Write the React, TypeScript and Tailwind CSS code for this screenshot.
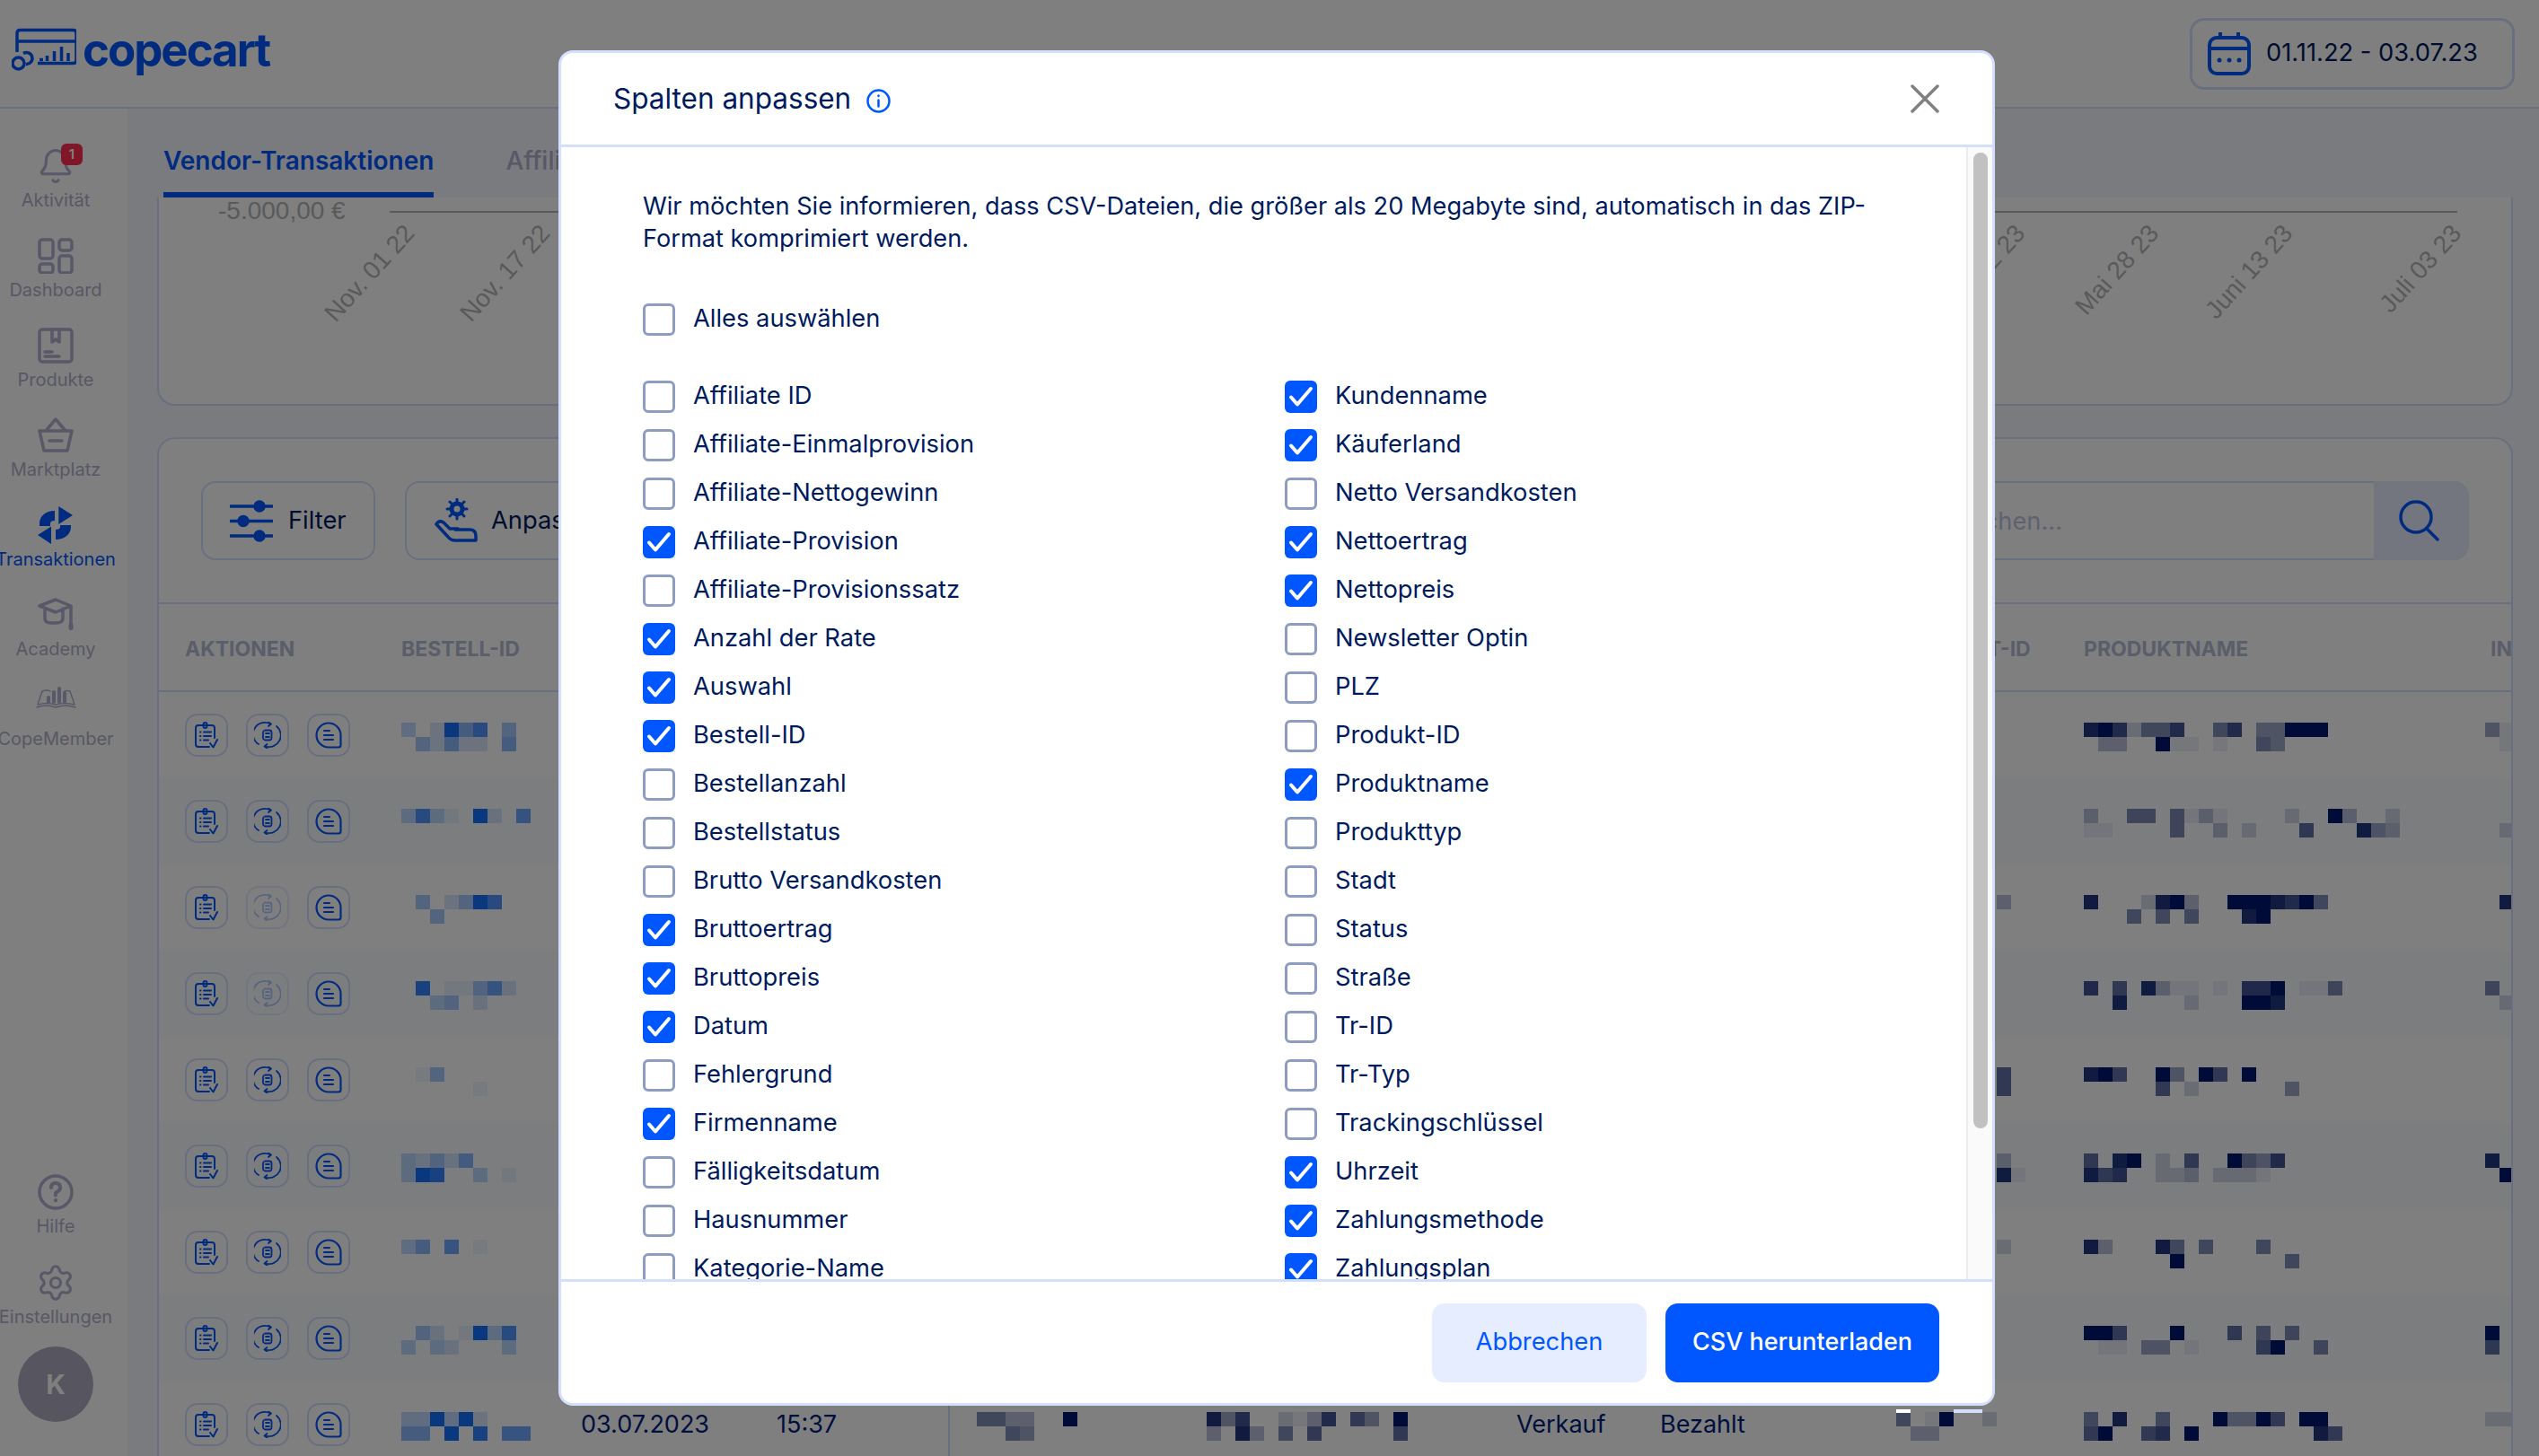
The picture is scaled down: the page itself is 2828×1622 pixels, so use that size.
import React from 'react';
import { Bell, Settings } from 'lucide-react';

const leftColumns: [string, boolean][] = [
  ['Affiliate ID', false],
  ['Affiliate-Einmalprovision', false],
  ['Affiliate-Nettogewinn', false],
  ['Affiliate-Provision', true],
  ['Affiliate-Provisionssatz', false],
  ['Anzahl der Rate', true],
  ['Auswahl', true],
  ['Bestell-ID', true],
  ['Bestellanzahl', false],
  ['Bestellstatus', false],
  ['Brutto Versandkosten', false],
  ['Bruttoertrag', true],
  ['Bruttopreis', true],
  ['Datum', true],
  ['Fehlergrund', false],
  ['Firmenname', true],
  ['Fälligkeitsdatum', false],
  ['Hausnummer', false],
  ['Kategorie-Name', false],
];

const rightColumns: [string, boolean][] = [
  ['Kundenname', true],
  ['Käuferland', true],
  ['Netto Versandkosten', false],
  ['Nettoertrag', true],
  ['Nettopreis', true],
  ['Newsletter Optin', false],
  ['PLZ', false],
  ['Produkt-ID', false],
  ['Produktname', true],
  ['Produkttyp', false],
  ['Stadt', false],
  ['Status', false],
  ['Straße', false],
  ['Tr-ID', false],
  ['Tr-Typ', false],
  ['Trackingschlüssel', false],
  ['Uhrzeit', true],
  ['Zahlungsmethode', true],
  ['Zahlungsplan', true],
];

// censored table cells, one digit per 16px block (0 = empty, 9 = full colour)
const rows = [
  { id: ['30295704', '04252205'], pid: [], name: ['89725570057044999', '03300911010054'], extra: ['41', '01'] },
  { id: ['373109206', ''], pid: [], name: ['3005505131000020093002', '1100005003020006000843'], extra: ['00', '02'] },
  { id: ['0402497', '0040000'], pid: ['00000003', ''], name: ['80002893009998795', '0005050500089'], extra: ['08', '00'], off: true },
  { id: ['08011462', '00340200'], pid: [], name: ['706083110107790115', '00800002000998'], extra: ['50', '02'], off: true },
  { id: ['0140000', '000001'], pid: ['00000006', '00000006'], name: ['896009409609', '000006020000004'], extra: ['00', '00'] },
  { id: ['32425', '39800301'], pid: ['00000003', '000000081'], name: ['60890206009547', '8670022302221'], extra: ['80', '09'] },
  { id: ['350601', ''], pid: ['00000002', ''], name: ['8300085050005', '000000900000005'], extra: ['00', '00'] },
  { id: ['04201937', '30320003'], pid: [], name: ['996000900060505', '01104401000069005'], extra: ['90', '60'] },
  { id: ['339392', '550908066'], pid: ['5019002', '0330000'], name: ['50800500094496099', '690067090000000086'], extra: ['22', '00'], last: true },
];

const gridCols = 'grid grid-cols-[241px_200px_218px_223px_256px_345px_160px_263px_209px_447px_100px]';

function Mosaic({ lines, color }: { lines: string[]; color: string }) {
  return (
    <div className="flex flex-col mt-[10px]">
      {lines.map((line, i) => (
        <div key={i} className="flex h-4">
          {line.split('').map((d, j) => (
            <div key={j} className={`w-4 h-4 shrink-0 ${color}`} style={{ opacity: Math.pow(Number(d) / 9, 1.2) }} />
          ))}
        </div>
      ))}
    </div>
  );
}

function Logo() {
  return (
    <svg width="72" height="50" viewBox="0 0 72 50" className="text-[#0057ff]">
      <path d="M6 27V6q0-3.500 3.500-3.500h59q3.500 0 3.500 3.500v30q0 3.500-3.500 3.500H29" fill="none" stroke="currentColor" strokeWidth="3.500" />
      <path d="M6 15h66" stroke="currentColor" strokeWidth="3.500" />
      <circle cx="7.500" cy="39.500" r="6.500" fill="none" stroke="currentColor" strokeWidth="3.500" />
      <path d="M13 28.500a6.500 6.500 0 1 1 3 12" fill="none" stroke="currentColor" strokeWidth="3.500" />
      <path d="M31 35.500h4M39.500 37v-6M47.500 37V26M55.500 37V21M63 37v-9" stroke="currentColor" strokeWidth="3.500" fill="none" />
    </svg>
  );
}

function CalendarIcon() {
  return (
    <svg width="48" height="48" viewBox="0 0 48 48" fill="none" stroke="#0057ff" strokeWidth="4" strokeLinecap="round">
      <rect x="2" y="6" width="44" height="40" rx="8" />
      <path d="M2 18h44M14 1v5M34 1v5" />
      <circle cx="13" cy="31" r="2.500" fill="#0057ff" stroke="none" />
      <circle cx="24" cy="31" r="2.500" fill="#0057ff" stroke="none" />
      <circle cx="35" cy="31" r="2.500" fill="#0057ff" stroke="none" />
    </svg>
  );
}

function SidebarItem({ icon, label, active }: { icon: React.ReactNode; label: string; active?: boolean }) {
  return (
    <div className="w-[124px] flex flex-col items-center">
      <div className="h-[42px] flex items-center justify-center">{icon}</div>
      <span className={`mt-[4px] text-[20px] leading-[26px] whitespace-nowrap ${active ? 'text-[#0057ff]' : 'text-[#b0b0cc]'}`}>{label}</span>
    </div>
  );
}

const navStroke = { fill: 'none', stroke: '#b0b0d0', strokeWidth: 3.5, strokeLinecap: 'round', strokeLinejoin: 'round' } as const;

function ClipboardIcon() {
  return (
    <svg width="26" height="30" viewBox="0 0 26 30" fill="none" stroke="#0057ff" strokeWidth="2" strokeLinecap="round" strokeLinejoin="round">
      <path d="M16 28H4q-3 0-3-3V7q0-3 3-3h15q3 0 3 3v11" />
      <rect x="9.500" y="1" width="4" height="6" rx="2" />
      <path d="M6 11.500h.5M6 16h.5M6 20.500h.5M10 11.500h8M10 16h8M10 20.500h5M17 24l3.500 4.500L25 20" />
    </svg>
  );
}

function RefundIcon() {
  return (
    <svg width="30" height="30" viewBox="0 0 30 30" fill="none" stroke="#0057ff" strokeWidth="1.800" strokeLinecap="round" strokeLinejoin="round">
      <path d="M5 25A13 13 0 0 1 18 2.500M25 5a13 13 0 0 1-12 22.500" />
      <path d="M16 .5l3 2-3 2.500M14.500 25l-3 2.500 3 2" />
      <path d="M12 9.500h5q2.500 0 2.500 2.500v6q0 2.500-2.500 2.500h-5q-2-.5-2-2.500v-6q0-2 2-2.500zM13 13h4M13 17h4" />
    </svg>
  );
}

function NoteIcon() {
  return (
    <svg width="30" height="30" viewBox="0 0 30 30" fill="none" stroke="#0057ff" strokeWidth="2.200" strokeLinecap="round" strokeLinejoin="round">
      <path d="M15 1.500a13.500 13.500 0 0 1 13.500 13.500v11q0 2.500-2.500 2.500H15a13.500 13.500 0 0 1 0-27z" />
      <path d="M10 10h6M10 15h10M10 20h10" />
    </svg>
  );
}

function ActionButton({ children, off }: { children: React.ReactNode; off?: boolean }) {
  return (
    <div className={`w-[48px] h-[48px] rounded-[14px] border-2 flex items-center justify-center ${off ? 'border-[#e6ecff]' : 'border-[#d4deff]'}`}>
      <div className={off ? 'opacity-30 flex' : 'flex'}>{children}</div>
    </div>
  );
}

function Checkbox({ checked, label }: { checked?: boolean; label: string }) {
  return (
    <div className="flex items-center gap-[20px] h-[36px]">
      {checked ? (
        <svg width="36" height="36" viewBox="0 0 36 36" className="shrink-0">
          <rect width="36" height="36" rx="6" fill="#0057ff" />
          <path d="M7 18.500l7 8L29 9" fill="none" stroke="#fff" strokeWidth="4" strokeLinecap="round" strokeLinejoin="round" />
        </svg>
      ) : (
        <div className="w-[36px] h-[36px] shrink-0 rounded-[6px] border-[3px] border-[#8f9cc2] bg-white" />
      )}
      <span className="text-[27.3px] leading-[36px] pb-[3px] text-[#001a5e] whitespace-nowrap">{label}</span>
    </div>
  );
}

export default function App() {
  return (
    <div className="relative w-[2828px] h-[1622px] overflow-hidden bg-white font-['Inter',sans-serif] text-[#001a5e]">
      <header className="h-[121px] flex items-center justify-between pl-[13px] pr-[27px] border-b-2 border-[#d4deff]">
        <div className="flex items-center gap-[7px] pb-[8px]">
          <Logo />
          <span className="text-[51px] font-bold leading-none tracking-[-0.04em] text-[#0057ff]">copecart</span>
        </div>
        <div className="w-[362px] h-[80px] rounded-[16px] border-[3px] border-[#d4deff] flex items-center gap-[17px] pl-[17px]">
          <CalendarIcon />
          <span className="text-[27.3px]">01.11.22 - 03.07.23</span>
        </div>
      </header>

      <div className="flex h-[1501px]">
        <aside className="w-[142px] shrink-0 bg-white flex flex-col justify-between pt-[43px] pb-[38px]">
          <div className="flex flex-col gap-[28px]">
            <div className="relative">
              <SidebarItem label="Aktivität" icon={<Bell size={42} color="#b0b0d0" strokeWidth={1.8} />} />
              <div className="absolute left-[68px] top-[-4px] w-[24px] h-[24px] rounded-[6px] bg-[#ff2e50] text-white text-[15px] font-semibold flex items-center justify-center">1</div>
            </div>
            <SidebarItem label="Dashboard" icon={
              <svg width="40" height="40" viewBox="0 0 40 40" {...navStroke}>
                <rect x="2" y="2" width="15" height="21" rx="3" /><rect x="24" y="2" width="14" height="12" rx="3" />
                <rect x="2" y="29" width="15" height="10" rx="3" /><rect x="24" y="20" width="14" height="19" rx="3" />
              </svg>
            } />
            <SidebarItem label="Produkte" icon={
              <svg width="40" height="40" viewBox="0 0 40 40" {...navStroke}>
                <rect x="2" y="2" width="36" height="36" rx="3" />
                <path d="M16 2v14l4-3 4 3V2M8 27h8M8 32h16" />
              </svg>
            } />
            <SidebarItem label="Marktplatz" icon={
              <svg width="40" height="40" viewBox="0 0 40 40" {...navStroke}>
                <path d="M2 15h36l-5 22H7zM9 15L20 2l11 13M13 26h14" />
              </svg>
            } />
            <SidebarItem label="Transaktionen" active icon={
              <svg width="40" height="42" viewBox="0 0 40 42" fill="#0057ff">
                <path d="M23.300 0L39 10 23.300 20zM15 22.500L0 32l15 10z" />
                <path d="M19 5C9 5 2 11 2 19v3h12v-3c0-2 2-3 5-3zM20 37c10 0 17-6 17-14v-2H25v2c0 2-2 3-5 3z" />
              </svg>
            } />
            <SidebarItem label="Academy" icon={
              <svg width="40" height="38" viewBox="0 0 40 38" {...navStroke}>
                <path d="M2 9L20 2l17 7-17 7zM8 12v11q0 5 7 5h5q8 0 8-5V12M37 9v19" />
                <rect x="34.500" y="28" width="5" height="8" rx="2" fill="#b0b0d0" stroke="none" />
              </svg>
            } />
            <SidebarItem label="CopeMember" icon={
              <svg width="45" height="26" viewBox="0 0 45 26" fill="none" stroke="#b0b0d0" strokeWidth="1.500" strokeLinecap="round" strokeLinejoin="round" className="self-start">
                <path d="M1 24q10-4 21 0 11-4 22 0M2 21L7 6q6-2 9 0M43 21L38 6q-4-1-6 0M2 21q10-3 20 0 10-3 21 0" />
                <path d="M14 18v-5M20 18V7M26 18V3M32 18V8" stroke="#b0b0d0" strokeWidth="4" />
              </svg>
            } />
          </div>
          <div className="flex flex-col">
            <SidebarItem label="Hilfe" icon={
              <svg width="40" height="40" viewBox="0 0 40 40" {...navStroke}>
                <circle cx="20" cy="20" r="18" />
                <path d="M15 15q0-5 5-5t5 5q0 3-3 4.500t-2 4M20 29v.5" strokeWidth="4" />
              </svg>
            } />
            <div className="mt-[29px]">
              <SidebarItem label="Einstellungen" icon={<Settings size={44} color="#b0b0d0" strokeWidth={1.7} />} />
            </div>
            <div className="ml-[20px] mt-[20px] w-[84px] h-[84px] rounded-full bg-[#aeaac0] flex items-center justify-center text-white text-[30px] font-bold">K</div>
          </div>
        </aside>

        <main className="flex-1 min-w-0 bg-[#f2f6ff]">
          <div className="h-[99px] flex gap-[80px] pl-[40px]">
            <div className="h-full flex items-center border-b-[6px] border-[#0057ff] text-[#0057ff] text-[28px] font-semibold pt-[22px]">Vendor-Transaktionen</div>
            <div className="h-full flex items-center text-[#b0b0cc] text-[28px] font-medium pt-[16px]">Affiliate-Transaktionen</div>
          </div>

          <section className="ml-[33px] mr-[29px] h-[232px] bg-white rounded-b-[20px] border-2 border-t-0 border-[#d4deff]">
            <svg width="2622" height="230" className="font-['Liberation_Sans',sans-serif] block">
              <text x="66" y="24" fontSize="28" fill="#b4b4b4">-5.000,00 €</text>
              <path d="M257 16H2560" stroke="#b4b4b4" strokeWidth="2" />
              <g fontSize="28" fill="#b4b4b4" textAnchor="end">
                <text transform="translate(286 41) rotate(-48)">Nov. 01 22</text>
                <text transform="translate(437 41) rotate(-48)">Nov. 17 22</text>
                <text transform="translate(2080 41) rotate(-48)">Mai 12 23</text>
                <text transform="translate(2229 41) rotate(-48)">Mai 28 23</text>
                <text transform="translate(2378 41) rotate(-48)">Juni 13 23</text>
                <text transform="translate(2566 41) rotate(-48)">Juli 03 23</text>
              </g>
            </svg>
          </section>

          <section className="mt-[35px] ml-[33px] mr-[29px] bg-white rounded-t-[20px] border-2 border-b-0 border-[#d4deff] overflow-hidden">
            <div className="h-[184px] pt-[47px] px-[47px] flex justify-between border-b-2 border-[#d4deff]">
              <div className="flex gap-[33px]">
                <div className="w-[194px] h-[88px] rounded-[16px] border-2 border-[#d4deff] flex items-center gap-[17px] pl-[30px] text-[27.3px]">
                  <svg width="48" height="48" viewBox="0 0 48 48" fill="#0057ff" stroke="#0057ff" strokeWidth="3.500" strokeLinecap="round">
                    <path d="M1 8h46M1 24.500h46M1 41h46" />
                    <circle cx="33" cy="8" r="5" /><circle cx="15" cy="24.500" r="5" /><circle cx="33" cy="41" r="5" />
                  </svg>
                  Filter
                </div>
                <div className="w-[280px] h-[88px] rounded-[16px] border-2 border-[#d4deff] flex items-center gap-[14px] pl-[30px] text-[27.3px]">
                  <svg width="50" height="50" viewBox="0 0 50 50" fill="none" stroke="#0057ff" strokeWidth="3.500" strokeLinecap="round" strokeLinejoin="round">
                    <circle cx="26" cy="12" r="6" strokeWidth="5" />
                    <path d="M26 1v3M26 20v3M15 12h3M34 12h3M18 4l2 2M32 18l2 2M34 4l-2 2M18 20l2-2" strokeWidth="3" />
                    <path d="M3 29l13 14q3 4 8 4h23v-5q0-7-7-7H24M3 29q3-5 8-2l7 7h9" />
                  </svg>
                  Anpassen
                </div>
              </div>
              <div className="flex h-[88px]">
                <input readOnly placeholder="Suchen..." className="w-[484px] h-full border-2 border-r-0 border-[#d4deff] rounded-l-[16px] pl-[14px] text-[27.3px] placeholder:text-[#bac6dc] outline-none" />
                <div className="w-[106px] h-full rounded-r-[16px] bg-[#e6ebff] flex items-center justify-center">
                  <svg width="46" height="46" viewBox="0 0 46 46" fill="none" stroke="#0057ff" strokeWidth="3.500" strokeLinecap="round" className="mr-[4px]">
                    <circle cx="19" cy="19" r="17" /><path d="M31 32l12 12" />
                  </svg>
                </div>
              </div>
            </div>

            <div className={`${gridCols} h-[98px] pl-[29px] items-center border-b-2 border-[#d4deff] text-[#b4bad4] text-[23px] font-bold pt-[4px]`}>
              <span>AKTIONEN</span>
              <span>BESTELL-ID</span>
              <span /><span /><span /><span /><span /><span />
              <span className="pl-[4px]">PRODUKT-ID</span>
              <span>PRODUKTNAME</span>
              <span className="pl-[6px]">INHALT</span>
            </div>

            {rows.map((row, i) => (
              <div key={i} className={`${gridCols} h-[96px] pl-[29px] pt-[24px] items-start ${i % 2 === 1 ? 'bg-[#f8fbff]' : 'bg-white'}`}>
                <div className="flex gap-[20px]">
                  <ActionButton><ClipboardIcon /></ActionButton>
                  <ActionButton off={row.off}><RefundIcon /></ActionButton>
                  <ActionButton><NoteIcon /></ActionButton>
                </div>
                <Mosaic lines={row.id} color="bg-[#1470ff]" />
                {row.last ? (
                  <>
                    <div className="h-[48px] flex items-center text-[27px] text-[#00217a]">03.07.2023</div>
                    <div className="relative h-[48px] flex items-center text-[27px] text-[#00217a]">
                      15:37
                      <div className="absolute right-[30px] top-[-24px] h-[96px] w-[2px] bg-[#d4deff]" />
                    </div>
                    <Mosaic lines={['5533009', '0054']} color="bg-[#00186e]" />
                    <Mosaic lines={['84700213706409', '30830506000006']} color="bg-[#00186e]" />
                    <div className="h-[48px] flex items-center text-[27px] text-[#00217a]">Verkauf</div>
                    <div className="h-[48px] flex items-center text-[27px] text-[#00217a]">Bezahlt</div>
                  </>
                ) : (
                  <>
                    <div /><div /><div /><div /><div /><div />
                  </>
                )}
                <Mosaic lines={row.pid} color="bg-[#00186e]" />
                <Mosaic lines={row.name} color="bg-[#00186e]" />
                <Mosaic lines={row.extra} color="bg-[#00186e]" />
              </div>
            ))}
          </section>
        </main>
      </div>

      <div className="absolute inset-0 bg-black/50" />

      <div className="absolute left-[2112px] top-[1570px] w-[16px] h-[4px] bg-white" />
      <div className="absolute left-[2176px] top-[1570px] w-[32px] h-[4px] bg-[#d4deff]" />

      <div className="absolute left-[622px] top-[56px] w-[1600px] h-[1510px] rounded-[16px] border-[3px] border-[#d4deff] bg-white flex flex-col overflow-hidden">
        <div className="h-[105px] shrink-0 flex items-center justify-between pl-[58px] pr-[59px] border-b-[3px] border-[#d4deff]">
          <div className="flex items-center gap-[17px]">
            <h2 className="text-[31.5px] leading-[44px] font-normal">Spalten anpassen</h2>
            <svg width="27" height="27" viewBox="0 0 27 27" fill="none" stroke="#0057ff" strokeWidth="2.500" strokeLinecap="round" className="mt-[4px]">
              <circle cx="13.500" cy="13.500" r="12" />
              <path d="M13.500 12.500v7M13.500 7.500v.5" />
            </svg>
          </div>
          <svg width="32" height="32" viewBox="0 0 32 32" stroke="#808080" strokeWidth="3.500" strokeLinecap="round">
            <path d="M2 2l28 28M30 2L2 30" />
          </svg>
        </div>

        <div className="flex-1 min-h-0 flex">
          <div className="flex-1 min-w-0 overflow-hidden pl-[91px] pt-[48px]">
            <p className="text-[27.2px] leading-[36px] w-[1420px]">
              Wir möchten Sie informieren, dass CSV-Dateien, die größer als 20 Megabyte sind, automatisch in das ZIP-<br />
              Format komprimiert werden.
            </p>
            <div className="mt-[54px]">
              <Checkbox label="Alles auswählen" />
            </div>
            <div className="mt-[50px] grid grid-cols-[715px_714px] gap-y-[18px]">
              {leftColumns.map(([label, checked], i) => (
                <React.Fragment key={label}>
                  <Checkbox label={label} checked={checked} />
                  <Checkbox label={rightColumns[i][0]} checked={rightColumns[i][1]} />
                </React.Fragment>
              ))}
            </div>
          </div>
          <div className="w-[29px] shrink-0 bg-[#fafafa] border-l-2 border-[#ececec] pl-[6px] pt-[6px]">
            <div className="w-[16px] h-[1087px] rounded-[8px] bg-[#c1c1c1]" />
          </div>
        </div>

        <div className="h-[138px] shrink-0 border-t-[3px] border-[#d4deff] flex items-center justify-end gap-[21px] pr-[59px]">
          <button className="w-[239px] h-[88px] rounded-[14px] bg-[#e6edff] text-[#0057ff] text-[27.3px]">Abbrechen</button>
          <button className="w-[305px] h-[88px] rounded-[14px] bg-[#0057ff] text-white text-[27px] font-medium">CSV herunterladen</button>
        </div>
      </div>
    </div>
  );
}
